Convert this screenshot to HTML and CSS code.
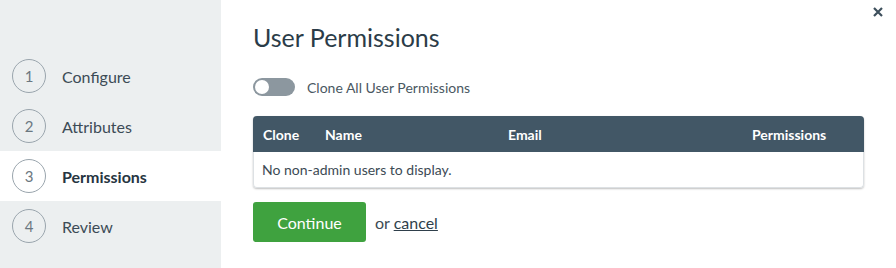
FILE: index.html
```html
<!DOCTYPE html>
<html>
<head>
<meta charset="utf-8">
<link rel="stylesheet" href="styles.css">
</head>
<body>
<div class="modal">
  <aside class="steps">
    <div class="step"><span class="num">1</span><span class="label">Configure</span></div>
    <div class="step"><span class="num">2</span><span class="label">Attributes</span></div>
    <div class="step active"><span class="num">3</span><span class="label">Permissions</span></div>
    <div class="step"><span class="num">4</span><span class="label">Review</span></div>
  </aside>
  <main class="content">
    <h1 class="title">User Permissions</h1>
    <label class="toggle-row">
      <span class="toggle"><span class="knob"></span></span>
      <span class="toggle-label">Clone All User Permissions</span>
    </label>
    <div class="table">
      <div class="thead">
        <span class="c-clone">Clone</span>
        <span class="c-name">Name</span>
        <span class="c-email">Email</span>
        <span class="c-perm">Permissions</span>
      </div>
      <div class="tbody">No non-admin users to display.</div>
    </div>
    <div class="actions">
      <button class="btn">Continue</button>
      <span class="or">or <a href="#" class="cancel">cancel</a></span>
    </div>
  </main>
  <button class="close" aria-label="Close">
    <svg width="10" height="10" viewBox="0 0 10 10"><path d="M1 1 L9 9 M9 1 L1 9" stroke="#3d4f5c" stroke-width="2.2" stroke-linecap="butt"/></svg>
  </button>
</div>
</body>
</html>
```
FILE: styles.css
```css
* { box-sizing: border-box; }
html, body { margin: 0; padding: 0; background: #fff; }
body { font-family: Lato, "Open Sans", sans-serif; color: #2f3f4b; }
.modal { position: relative; display: flex; width: 896px; height: 268px; }
.steps { width: 221px; background: #eceff0; padding-top: 51px; flex: none; }
.step { display: flex; align-items: center; height: 50px; padding-left: 12px; }
.step.active { background: #fff; }
.num { width: 34px; height: 34px; border: 1px solid #9aa5ad; border-radius: 50%; display: flex; align-items: center; justify-content: center; font-size: 15px; color: #6b7780; }
.label { margin-left: 16px; font-size: 16px; color: #3c4b56; }
.step.active .label { font-weight: 700; color: #263541; }
.content { flex: 1; padding: 22px 32px 0 32px; }
.title { margin: 0; font-size: 25px; font-weight: 400; color: #2b3c48; line-height: 31px; }
.toggle-row { display: flex; align-items: center; margin-top: 25px; height: 18px; }
.toggle { width: 42px; height: 18px; border-radius: 9px; background: #8c979f; position: relative; flex: none; }
.knob { position: absolute; left: 2px; top: 2px; width: 14px; height: 14px; border-radius: 50%; background: #fff; }
.toggle-label { margin-left: 12px; font-size: 14px; color: #4a5862; }
.table { margin-top: 20px; width: 611px; border-radius: 4px; box-shadow: 0 1px 2px rgba(0,0,0,0.25); border: 1px solid #dde1e4; border-top: none; }
.thead { display: flex; align-items: center; height: 36px; background: #425766; border-radius: 4px 4px 0 0; color: #fff; font-weight: 700; font-size: 14px; padding-left: 10px; margin: 0 -1px; }
.c-clone { width: 62px; }
.c-name { width: 183px; }
.c-email { width: 244px; }
.tbody { height: 35px; display: flex; align-items: center; padding-left: 8px; font-size: 14px; color: #3c4a54; }
.actions { display: flex; align-items: center; margin-top: 14px; }
.btn { width: 113px; height: 40px; border: none; border-radius: 3px; background: #3fa23f; color: #fff; font-family: inherit; font-size: 16px; padding: 0; }
.or { margin-left: 9px; font-size: 16px; color: #3c4a54; }
.cancel { color: #2f3f4b; text-decoration: underline; }
.close { position: absolute; right: 13px; top: 7px; background: none; border: none; padding: 0; width: 10px; height: 10px; display: block; }
.close svg { display: block; }
```
